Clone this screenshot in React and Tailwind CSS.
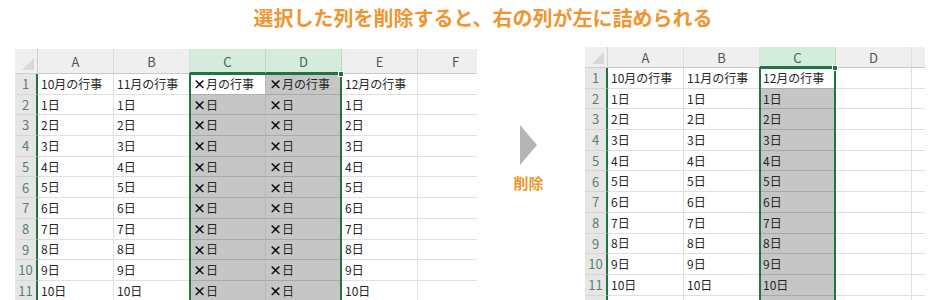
import React from "react";

const FONT = { fontFamily: '"Noto Sans CJK JP", "Noto Sans", sans-serif' };

const leftRows = [
  ["10月の行事", "11月の行事", "×月の行事", "×月の行事", "12月の行事", ""],
  ...Array.from({ length: 11 }, (_, i) =>
    i < 10 ? [`${i + 1}日`, `${i + 1}日`, "×日", "×日", `${i + 1}日`, ""] : ["", "", "", "", "", ""]
  ),
];

const rightRows = [
  ["10月の行事", "11月の行事", "12月の行事", "", ""],
  ...Array.from({ length: 11 }, (_, i) =>
    i < 10 ? [`${i + 1}日`, `${i + 1}日`, `${i + 1}日`, "", ""] : ["", "", "", "", ""]
  ),
];

// renders "×" in bold black, rest normal
function CellText({ text }) {
  if (text.startsWith("×")) {
    return (
      <>
        <span className="text-[13px] font-bold text-black">×</span>
        {text.slice(1)}
      </>
    );
  }
  return text;
}

function Sheet({ cols, rows, selected, headerH, width }) {
  const selStart = 23 + selected[0] * 76;
  const selWidth = selected.length * 76;

  return (
    <div className="relative overflow-hidden bg-white" style={{ width }}>
      {/* column headers */}
      <div className="flex bg-[#efefef]" style={{ height: headerH }}>
        <div className="relative w-[23px] shrink-0 border-b border-r border-[#d0d0d0] bg-[#efefef]">
          <svg className="absolute bottom-[3px] right-[3px]" width="12" height="12" viewBox="0 0 12 12">
            <polygon points="12,0 12,12 0,12" fill="#d8d8d8" />
          </svg>
        </div>
        {cols.map((c, i) => {
          const sel = selected.includes(i);
          return (
            <div
              key={i}
              className={
                sel
                  ? "flex w-[76px] shrink-0 items-center justify-center border-b-2 border-r border-b-[#217346] border-r-[#bcd9c6] bg-[#d3ecdc] pt-[2px] text-[13px] text-[#3d6a50]"
                  : "flex w-[76px] shrink-0 items-center justify-center border-b border-r border-b-[#c9c9c9] border-r-[#dcdcdc] pt-[2px] text-[13px] text-[#555]"
              }
            >
              {c}
            </div>
          );
        })}
      </div>

      {/* data rows */}
      {rows.map((row, r) => (
        <div key={r} className="flex h-[20.7px]">
          <div className="flex w-[23px] shrink-0 items-center justify-center border-b border-r-2 border-b-[#d6d6d6] border-r-[#217346] bg-[#e6e6e6] text-[13px] text-[#5f7f6e]">
            {r + 1}
          </div>
          {row.map((v, c) => {
            const sel = selected.includes(c);
            const active = sel && r === 0 && c === selected[0];
            const cls = active
              ? "flex w-[76px] shrink-0 items-center overflow-hidden whitespace-nowrap border-b border-r border-b-[#b0b0b0] border-r-[#b8b8b8] bg-white pl-[3px] text-[12px] text-[#262626]"
              : sel
              ? "flex w-[76px] shrink-0 items-center overflow-hidden whitespace-nowrap border-b border-r border-b-[#a9a9a9] border-r-[#b8b8b8] bg-[#c6c6c6] pl-[3px] text-[12px] text-[#262626]"
              : "flex w-[76px] shrink-0 items-center overflow-hidden whitespace-nowrap border-b border-r border-[#e0e0e0] bg-white pl-[3px] text-[12px] text-[#262626]";
            return (
              <div key={c} className={cls}>
                <CellText text={v} />
              </div>
            );
          })}
        </div>
      ))}

      {/* selection outline */}
      <div
        className="pointer-events-none absolute bottom-[-4px] border-2 border-[#217346]"
        style={{ left: selStart - 1, width: selWidth + 1, top: headerH - 1 }}
      />
      <div
        className="absolute h-[6px] w-[6px] border border-white bg-[#217346]"
        style={{ left: selStart + selWidth - 4, top: headerH - 3 }}
      />
    </div>
  );
}

export default function App() {
  return (
    <div className="h-[300px] w-[950px] overflow-hidden bg-white" style={FONT}>
      <div className="pl-[16px] pt-[4px] text-center text-[20px] font-bold leading-[28px] text-[#f0952f]">
        選択した列を削除すると、右の列が左に詰められる
      </div>

      <div className="mt-[15px] flex items-start pl-[15px]">
        <div className="mt-[2px]">
          <Sheet
            cols={["A", "B", "C", "D", "E", "F"]}
            rows={leftRows}
            selected={[2, 3]}
            headerH={25}
            width={462}
          />
        </div>

        <div className="mt-[78px] flex w-[108px] shrink-0 flex-col items-center pr-[5px]">
          <svg width="17" height="40" viewBox="0 0 17 40">
            <polygon points="0,0 17,20 0,40" fill="#b5b5b5" />
          </svg>
          <div className="mt-[8px] text-[15px] font-bold leading-[20px] text-[#f0952f]">削除</div>
        </div>

        <Sheet
          cols={["A", "B", "C", "D", ""]}
          rows={rightRows}
          selected={[2]}
          headerH={21}
          width={340}
        />
      </div>
    </div>
  );
}
